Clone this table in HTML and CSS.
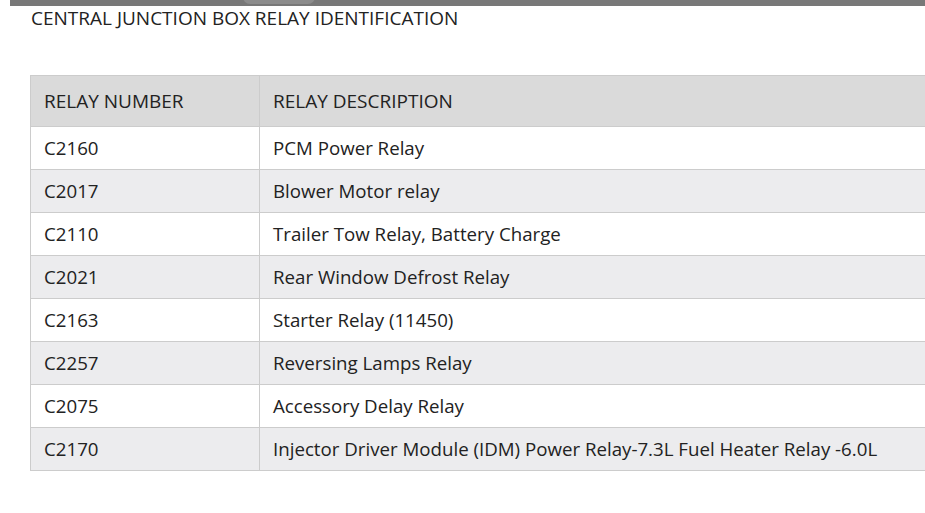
FILE: index.html
```html
<!DOCTYPE html>
<html>
<head>
<meta charset="utf-8">
<link rel="stylesheet" href="styles.css">
</head>
<body>
<div class="topbar"><span class="pill"></span></div>
<h2 class="title">CENTRAL JUNCTION BOX RELAY IDENTIFICATION</h2>
<table class="relays">
  <thead>
    <tr><th class="c1">RELAY NUMBER</th><th>RELAY DESCRIPTION</th></tr>
  </thead>
  <tbody>
    <tr><td>C2160</td><td>PCM Power Relay</td></tr>
    <tr><td>C2017</td><td>Blower Motor relay</td></tr>
    <tr><td>C2110</td><td>Trailer Tow Relay, Battery Charge</td></tr>
    <tr><td>C2021</td><td>Rear Window Defrost Relay</td></tr>
    <tr><td>C2163</td><td>Starter Relay (11450)</td></tr>
    <tr><td>C2257</td><td>Reversing Lamps Relay</td></tr>
    <tr><td>C2075</td><td>Accessory Delay Relay</td></tr>
    <tr><td>C2170</td><td>Injector Driver Module (IDM) Power Relay-7.3L Fuel Heater Relay -6.0L</td></tr>
  </tbody>
</table>
</body>
</html>
```
FILE: styles.css
```css
html, body {
  margin: 0;
  padding: 0;
  overflow: hidden;
  background: #fff;
}
body {
  font-family: "Open Sans", "Noto Sans", sans-serif;
  color: #222;
  width: 925px;
}
.topbar {
  position: relative;
  margin-left: 10px;
  height: 6px;
  background: #787878;
}
.pill {
  position: absolute;
  left: 233px;
  top: -10px;
  width: 72px;
  height: 14px;
  border-radius: 7px;
  background: #8c8c8c;
}
.title {
  margin: 0;
  padding: 2px 0 0 31px;
  font-size: 19px;
  font-weight: 400;
  line-height: 20px;
  color: #222;
}
.relays {
  margin: 47px 0 0 30px;
  width: 930px;
  border-collapse: collapse;
  font-size: 18.7px;
  line-height: 24px;
}
.relays th, .relays td {
  border: 1px solid #cccccc;
  text-align: left;
  font-weight: 400;
  padding: 9px 13px;
  color: #222;
}
.relays th {
  background: #dadada;
  font-size: 19px;
  padding-top: 13px;
  padding-bottom: 13px;
}
.relays .c1 {
  width: 202px;
}
.relays tbody tr:nth-child(even) td {
  background: #ececee;
}
```
